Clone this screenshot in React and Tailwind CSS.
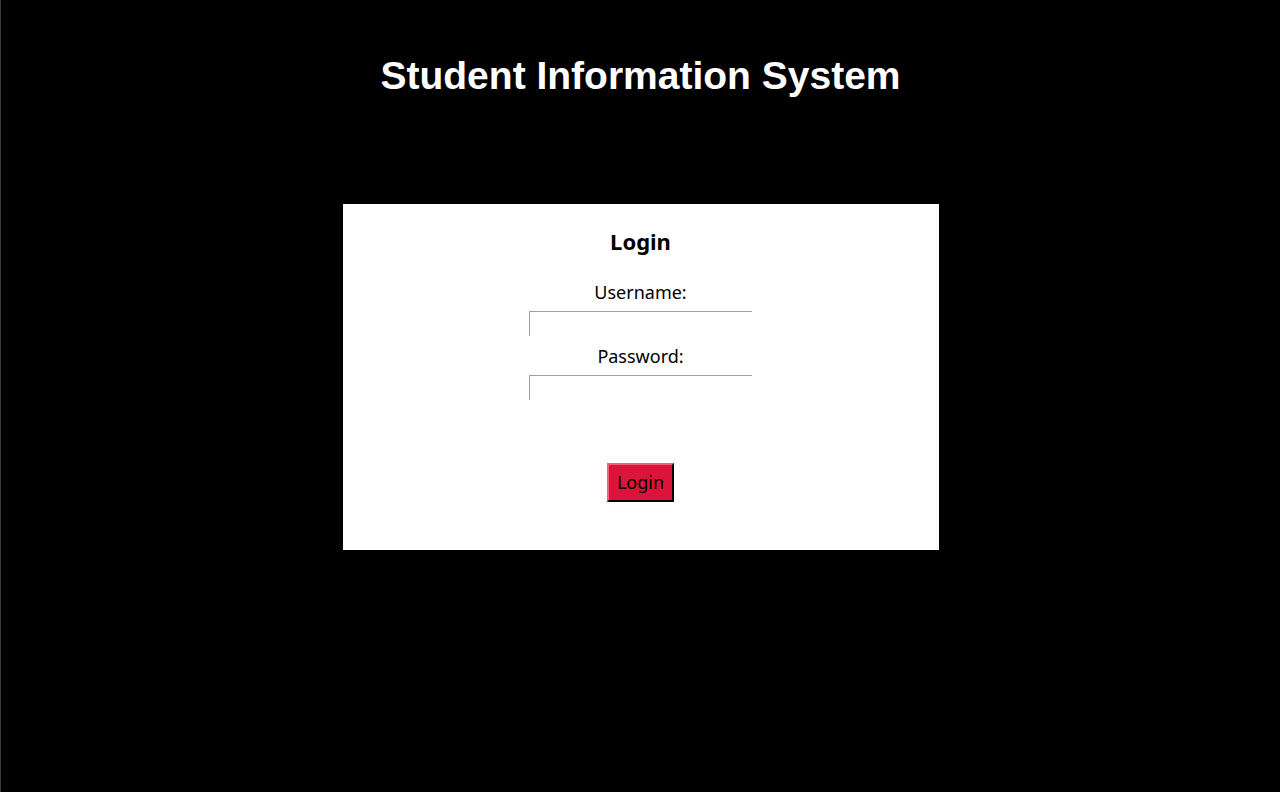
export default function App() {
  const gothic = { fontFamily: '"Century Gothic", "Noto Sans", "DejaVu Sans", sans-serif' };
  return (
    <div className="min-h-[792px] bg-black border-l border-[#3a3a3a] flex flex-col items-center">
      <h1 className="mt-[52px] text-[39px] leading-[48px] font-bold text-white font-['Liberation_Sans',Arial,sans-serif]">
        Student Information System
      </h1>
      <div className="mt-[104px] w-[596px] h-[346px] bg-white flex flex-col items-center" style={gothic}>
        <h2 className="mt-[24px] text-[22px] leading-[26px] font-bold text-black">Login</h2>
        <label className="mt-[26px] text-[18px] leading-[24px] text-black">Username:</label>
        <input type="text" className="mt-[7px] w-[223px] h-[25px] border-t border-l border-[#a0a0a0] border-r-0 border-b-0 bg-white outline-none" />
        <label className="mt-[8px] text-[18px] leading-[24px] text-black">Password:</label>
        <input type="password" className="mt-[7px] w-[223px] h-[25px] border-t border-l border-[#a0a0a0] border-r-0 border-b-0 bg-white outline-none" />
        <button className="mt-[63px] w-[67px] h-[39px] bg-[#dc143c] text-[18px] text-black border-2 border-t-[#f0607a] border-l-[#f0607a] border-r-black border-b-black">
          Login
        </button>
      </div>
    </div>
  );
}
